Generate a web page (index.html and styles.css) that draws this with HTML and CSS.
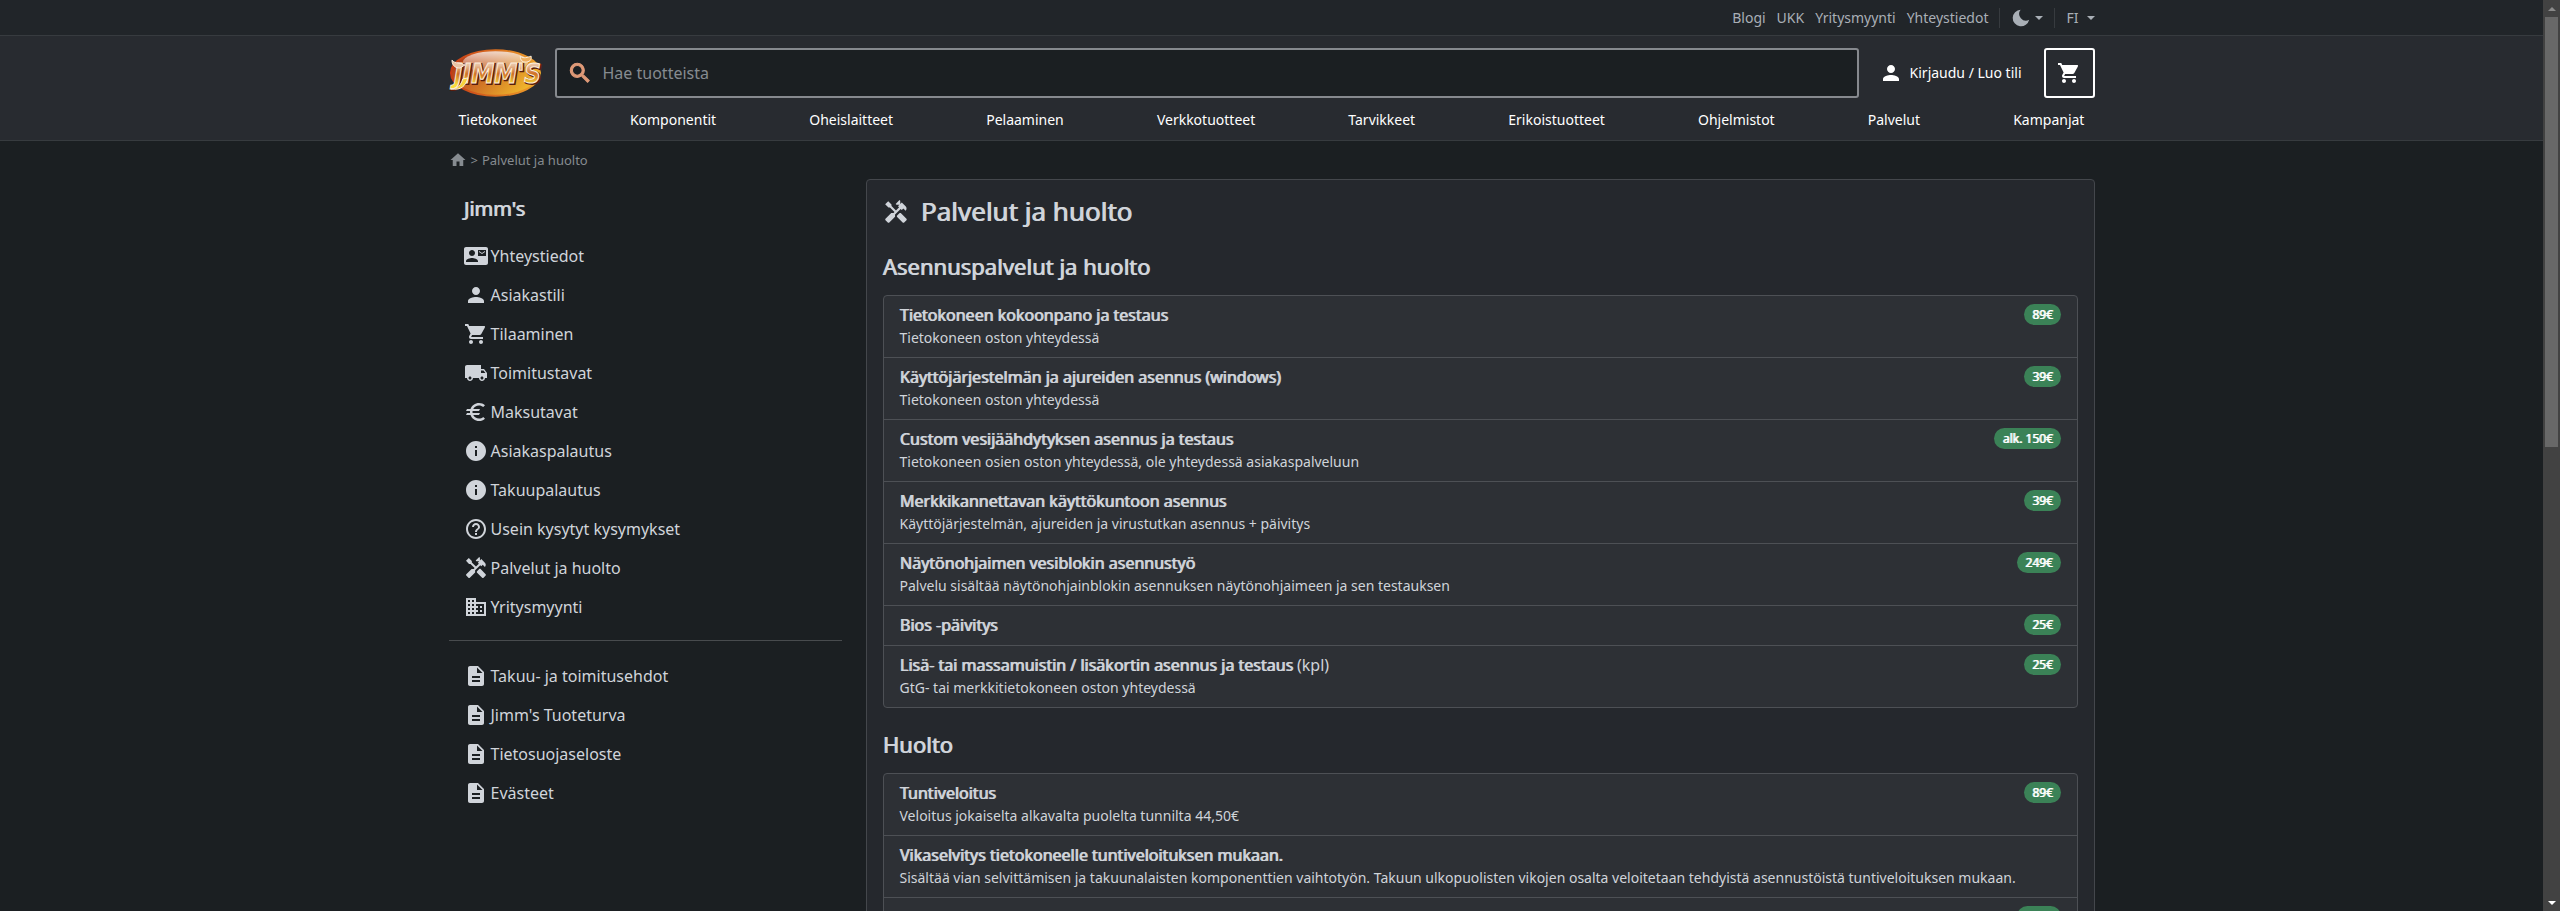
FILE: index.html
```html
<!DOCTYPE html>
<html lang="fi">
<head>
<meta charset="utf-8">
<title>Palvelut ja huolto</title>
<link rel="stylesheet" href="styles.css">
</head>
<body>
<svg class="defs" aria-hidden="true">
  <symbol id="person" viewBox="0 0 24 24"><path d="M12 12c2.21 0 4-1.79 4-4s-1.79-4-4-4-4 1.790-4 4 1.790 4 4 4zm0 2c-2.670 0-8 1.340-8 4v2h16v-2c0-2.660-5.330-4-8-4z"/></symbol>
  <symbol id="cart" viewBox="0 0 24 24"><path d="M7 18c-1.100 0-1.990.9-1.990 2S5.900 22 7 22s2-.9 2-2-.9-2-2-2zM1 2v2h2l3.600 7.590-1.350 2.450c-.16.280-.25.610-.25.960 0 1.100.9 2 2 2h12v-2H7.420c-.14 0-.25-.11-.25-.25l.03-.12.900-1.630h7.450c.75 0 1.410-.41 1.750-1.030l3.580-6.490A1 1 0 0 0 20 4H5.210l-.94-2H1zm16 16c-1.100 0-1.990.9-1.990 2s.89 2 1.990 2 2-.9 2-2-.9-2-2-2z"/></symbol>
  <symbol id="tools" viewBox="0 0 24 24"><path d="M21.670 18.170l-5.300-5.300h-.99l-2.540 2.540v.99l5.300 5.300c.39.390 1.020.390 1.410 0l2.120-2.120c.39-.38.390-1.020 0-1.410z"/><path d="M17.340 10.190l1.410-1.410 2.120 2.120c1.170-1.170 1.170-3.070 0-4.240l-3.540-3.540-1.410 1.410V1.710L15.220 1l-3.540 3.540.71.710h2.830l-1.410 1.410 1.060 1.060-2.890 2.890-4.130-4.130V5.060L4.830 2.040 2 4.870 5.030 7.900h1.410l4.130 4.130-.85.850H7.600l-5.300 5.300c-.39.390-.39 1.020 0 1.410l2.120 2.120c.39.390 1.020.390 1.410 0l5.300-5.300v-2.120l5.150-5.150 1.060 1.050z"/></symbol>
  <symbol id="info" viewBox="0 0 24 24"><path d="M12 2C6.480 2 2 6.480 2 12s4.480 10 10 10 10-4.480 10-10S17.520 2 12 2zm1 15h-2v-6h2v6zm0-8h-2V7h2v2z"/></symbol>
  <symbol id="doc" viewBox="0 0 24 24"><path d="M14 2H6c-1.100 0-1.990.9-1.990 2L4 20c0 1.100.89 2 1.990 2H18c1.100 0 2-.9 2-2V8l-6-6zm2 16H8v-2h8v2zm0-4H8v-2h8v2zm-3-5V3.500L18.500 9H13z"/></symbol>
  <symbol id="card" viewBox="0 0 24 24"><path d="M21 8V7l-3 2-3-2v1l3 2 3-2zm1-5H2C.9 3 0 3.900 0 5v14c0 1.100.9 2 2 2h20c1.100 0 1.990-.9 1.990-2L24 5c0-1.100-.9-2-2-2zM8 6c1.660 0 3 1.340 3 3s-1.340 3-3 3-3-1.340-3-3 1.340-3 3-3zm6 12H2v-1c0-2 4-3.100 6-3.100s6 1.100 6 3.100v1zm8-6h-8V6h8v6z"/></symbol>
  <symbol id="truck" viewBox="0 0 24 24"><path d="M20 8h-3V4H3c-1.100 0-2 .9-2 2v11h2c0 1.660 1.340 3 3 3s3-1.340 3-3h6c0 1.660 1.340 3 3 3s3-1.340 3-3h2v-5l-3-4zM6 18.500c-.83 0-1.500-.67-1.500-1.500s.67-1.500 1.500-1.500 1.500.67 1.500 1.500-.67 1.500-1.500 1.500zm13.500-9l1.960 2.500H17V9.500h2.500zm-1.500 9c-.83 0-1.500-.67-1.500-1.500s.67-1.500 1.500-1.500 1.500.67 1.500 1.500-.67 1.500-1.500 1.500z"/></symbol>
  <symbol id="euro" viewBox="0 0 24 24"><path d="M15 18.500c-2.510 0-4.680-1.420-5.760-3.500H15l1-2H8.580c-.05-.33-.08-.66-.08-1s.03-.67.080-1H15l1-2H9.240C10.320 6.920 12.500 5.500 15 5.500c1.610 0 3.090.590 4.230 1.570L21 5.300C19.410 3.870 17.300 3 15 3c-3.920 0-7.240 2.510-8.480 6H3l-1 2h4.060a8.300 8.300 0 0 0 0 2H3l-1 2h4.520c1.240 3.490 4.560 6 8.480 6 2.310 0 4.410-.87 6-2.300l-1.780-1.770c-1.130.980-2.600 1.570-4.220 1.570z"/></symbol>
  <symbol id="help" viewBox="0 0 24 24"><path d="M11 18h2v-2h-2v2zm1-16C6.480 2 2 6.480 2 12s4.480 10 10 10 10-4.480 10-10S17.520 2 12 2zm0 18c-4.410 0-8-3.590-8-8s3.590-8 8-8 8 3.590 8 8-3.590 8-8 8zm0-14c-2.210 0-4 1.790-4 4h2c0-1.100.9-2 2-2s2 .9 2 2c0 2-3 1.750-3 5h2c0-2.250 3-2.500 3-5 0-2.210-1.790-4-4-4z"/></symbol>
  <symbol id="company" viewBox="0 0 24 24"><path d="M12 7V3H2v18h20V7H12zM6 19H4v-2h2v2zm0-4H4v-2h2v2zm0-4H4V9h2v2zm0-4H4V5h2v2zm4 12H8v-2h2v2zm0-4H8v-2h2v2zm0-4H8V9h2v2zm0-4H8V5h2v2zm10 12h-8v-2h2v-2h-2v-2h2v-2h-2V9h8v10zm-2-8h-2v2h2v-2zm0 4h-2v2h2v-2z"/></symbol>
  <symbol id="home" viewBox="0 0 24 24"><path d="M10 20v-6h4v6h5v-8h3L12 3 2 12h3v8z"/></symbol>
  <symbol id="search" viewBox="0 0 24 24"><path d="M15.500 14h-.79l-.28-.27A6.470 6.470 0 0 0 16 9.500 6.500 6.500 0 1 0 9.500 16c1.610 0 3.090-.59 4.230-1.570l.27.280v.79l5 4.990L20.490 19l-4.990-5zm-6 0C7.010 14 5 11.990 5 9.500S7.010 5 9.500 5 14 7.010 14 9.500 11.990 14 9.500 14z"/></symbol>
  <symbol id="moon" viewBox="0 0 24 24"><path d="M11.500 2a10 10 0 1 0 10.300 12.200A8.200 8.200 0 0 1 11.500 2z"/></symbol>
</svg>
<div class="viewport">
  <div class="page">
    <div class="topbar">
      <div class="container topbar-inner">
        <nav class="toplinks" aria-label="Yritys">
          <a href="#">Blogi</a><a href="#">UKK</a><a href="#">Yritysmyynti</a><a href="#">Yhteystiedot</a>
        </nav>
        <button class="drop theme" type="button" aria-label="Teema"><svg class="moon"><use href="#moon"/></svg><span class="caret"></span></button>
        <button class="drop lang" type="button">FI<span class="caret"></span></button>
      </div>
    </div>
    <header class="header">
      <div class="container">
        <div class="header-row">
          <a class="logo" href="#" aria-label="Jimm's">
            <svg viewBox="0 0 94 50">
              <defs>
                <linearGradient id="oval" x1="0" y1="0" x2="1" y2="0.500"><stop offset="0" stop-color="#a82a12"/><stop offset=".5" stop-color="#cc6a24"/><stop offset="1" stop-color="#efb42c"/></linearGradient>
                <linearGradient id="rim" x1="0" y1="0" x2="1" y2="0"><stop offset="0" stop-color="#c63a14"/><stop offset="1" stop-color="#f0a52c"/></linearGradient>
                <linearGradient id="shine" x1="0" y1="0" x2="0" y2="1"><stop offset="0" stop-color="#fff" stop-opacity=".75"/><stop offset="1" stop-color="#fff" stop-opacity=".05"/></linearGradient>
                <linearGradient id="letters" x1="0" y1="0" x2="0" y2="1"><stop offset="0.200" stop-color="#e9c3a4"/><stop offset=".5" stop-color="#cf6f26"/><stop offset=".85" stop-color="#f8dc3c"/></linearGradient>
              </defs>
              <ellipse cx="47" cy="25" rx="45" ry="23" fill="url(#oval)" stroke="url(#rim)" stroke-width="2"/>
              <ellipse cx="47" cy="14" rx="33" ry="11" fill="url(#shine)"/>
              <text class="logo-shadow" x="6" y="36">JIMM'S</text>
              <text class="logo-text" x="5" y="35">JIMM'S</text>
              <path d="M2 41c7 0 10-4 12-10l5-1c-2 8-7 13-17 11z" fill="#f6d23a" stroke="#fbeedd"/>
              <path d="M3 12c3 4 9 2 13 5l-5 3c-4 0-8-2-8-8z" fill="#e9c3a4" stroke="#fbeedd"/>
              <path d="M72 8c4 3 7 1 11 0 1 4-2 6-6 6-3 0-5-2-5-6z" fill="#efb060" stroke="#fbeedd"/>
            </svg>
          </a>
          <form class="search" role="search">
            <svg><use href="#search"/></svg>
            <input type="text" aria-label="Hae tuotteista" placeholder="Hae tuotteista">
          </form>
          <a class="login" href="#"><svg><use href="#person"/></svg>Kirjaudu / Luo tili</a>
          <button class="cart" type="button" aria-label="Ostoskori"><svg><use href="#cart"/></svg></button>
        </div>
        <nav class="mainnav" aria-label="Tuotealueet">
          <a href="#">Tietokoneet</a><a href="#">Komponentit</a><a href="#">Oheislaitteet</a><a href="#">Pelaaminen</a><a href="#">Verkkotuotteet</a><a href="#">Tarvikkeet</a><a href="#">Erikoistuotteet</a><a href="#">Ohjelmistot</a><a href="#">Palvelut</a><a href="#">Kampanjat</a>
        </nav>
      </div>
    </header>
    <div class="container">
      <nav class="crumbs" aria-label="Murupolku"><a href="#" aria-label="Etusivu"><svg><use href="#home"/></svg></a><span>&gt;</span><a href="#">Palvelut ja huolto</a></nav>
      <div class="columns">
        <aside class="side">
          <h2>Jimm's</h2>
          <ul>
            <li><a href="#"><svg><use href="#card"/></svg>Yhteystiedot</a></li>
            <li><a href="#"><svg><use href="#person"/></svg>Asiakastili</a></li>
            <li><a href="#"><svg><use href="#cart"/></svg>Tilaaminen</a></li>
            <li><a href="#"><svg><use href="#truck"/></svg>Toimitustavat</a></li>
            <li><a href="#"><svg><use href="#euro"/></svg>Maksutavat</a></li>
            <li><a href="#"><svg><use href="#info"/></svg>Asiakaspalautus</a></li>
            <li><a href="#"><svg><use href="#info"/></svg>Takuupalautus</a></li>
            <li><a href="#"><svg><use href="#help"/></svg>Usein kysytyt kysymykset</a></li>
            <li><a href="#"><svg><use href="#tools"/></svg>Palvelut ja huolto</a></li>
            <li><a href="#"><svg><use href="#company"/></svg>Yritysmyynti</a></li>
          </ul>
          <hr>
          <ul>
            <li><a href="#"><svg><use href="#doc"/></svg>Takuu- ja toimitusehdot</a></li>
            <li><a href="#"><svg><use href="#doc"/></svg>Jimm's Tuoteturva</a></li>
            <li><a href="#"><svg><use href="#doc"/></svg>Tietosuojaseloste</a></li>
            <li><a href="#"><svg><use href="#doc"/></svg>Evästeet</a></li>
          </ul>
        </aside>
        <main class="panel">
          <h1><svg><use href="#tools"/></svg>Palvelut ja huolto</h1>
          <h2>Asennuspalvelut ja huolto</h2>
          <ul class="services">
            <li><div><p class="name"><b>Tietokoneen kokoonpano ja testaus</b></p><p class="note">Tietokoneen oston yhteydessä</p></div><span class="price">89€</span></li>
            <li><div><p class="name"><b>Käyttöjärjestelmän ja ajureiden asennus (windows)</b></p><p class="note">Tietokoneen oston yhteydessä</p></div><span class="price">39€</span></li>
            <li><div><p class="name"><b>Custom vesijäähdytyksen asennus ja testaus</b></p><p class="note">Tietokoneen osien oston yhteydessä, ole yhteydessä asiakaspalveluun</p></div><span class="price">alk. 150€</span></li>
            <li><div><p class="name"><b>Merkkikannettavan käyttökuntoon asennus</b></p><p class="note">Käyttöjärjestelmän, ajureiden ja virustutkan asennus + päivitys</p></div><span class="price">39€</span></li>
            <li><div><p class="name"><b>Näytönohjaimen vesiblokin asennustyö</b></p><p class="note">Palvelu sisältää näytönohjainblokin asennuksen näytönohjaimeen ja sen testauksen</p></div><span class="price">249€</span></li>
            <li><div><p class="name"><b>Bios -päivitys</b></p></div><span class="price">25€</span></li>
            <li><div><p class="name"><b>Lisä- tai massamuistin / lisäkortin asennus ja testaus</b> (kpl)</p><p class="note">GtG- tai merkkitietokoneen oston yhteydessä</p></div><span class="price">25€</span></li>
          </ul>
          <h2>Huolto</h2>
          <ul class="services">
            <li><div><p class="name"><b>Tuntiveloitus</b></p><p class="note">Veloitus jokaiselta alkavalta puolelta tunnilta 44,50€</p></div><span class="price">89€</span></li>
            <li><div><p class="name"><b>Vikaselvitys tietokoneelle tuntiveloituksen mukaan.</b></p><p class="note">Sisältää vian selvittämisen ja takuunalaisten komponenttien vaihtotyön. Takuun ulkopuolisten vikojen osalta veloitetaan tehdyistä asennustöistä tuntiveloituksen mukaan.</p></div></li>
            <li><div><p class="name"><b>Laajennus paikan päällä</b></p></div><span class="price">149€</span></li>
          </ul>
        </main>
      </div>
    </div>
  </div>
  <div class="scrollbar" aria-hidden="true"><span class="arrow up"></span><span class="track"><span class="thumb"></span></span><span class="arrow down"></span></div>
</div>
</body>
</html>
```
FILE: styles.css
```css
* { box-sizing: border-box; }
body {
  margin: 0;
  background: #1b1f22;
  color: #d0d4da;
  font: 16px/24px "Noto Sans", "Open Sans", sans-serif;
}
a { color: inherit; text-decoration: none; }
button { font: inherit; color: inherit; background: none; border: 0; padding: 0; }
h1, h2, p, ul { margin: 0; padding: 0; font-weight: 400; }
ul { list-style: none; }
svg { fill: currentColor; flex: none; }
.defs { display: none; }

.viewport { display: flex; height: 100vh; overflow: hidden; }
.page { flex: 1; min-width: 0; }
.container { max-width: 1646px; margin: 0 auto; }

.topbar { background: #212529; border-bottom: 1px solid #373b3f; font-size: 14px; line-height: 21px; color: #a9afb6; }
.topbar-inner { display: flex; justify-content: flex-end; align-items: center; height: 35px; }
.toplinks { display: flex; gap: 11px; padding-right: 11px; }
.drop { display: flex; align-items: center; height: 20px; border-left: 1px solid #373b3f; }
.theme { gap: 4px; padding: 0 11px; }
.lang { gap: 8px; padding-left: 11px; }
.moon { width: 20px; height: 20px; }
.caret { border: 4px solid transparent; border-top-color: currentColor; border-bottom: 0; }

.header { background: #282b30; border-bottom: 1px solid #373b3f; color: #fff; }
.header-row { display: flex; align-items: center; padding-top: 12px; }
.logo { display: flex; margin-right: 13px; }
.logo svg { width: 93px; height: 50px; overflow: visible; }
.logo text { font: italic bold 26px "DejaVu Sans Condensed", "DejaVu Sans", sans-serif; }
.logo-shadow { fill: #5a1c0c; stroke: #5a1c0c; stroke-width: 2px; }
.logo-text { fill: url(#letters); stroke: #fbeedd; stroke-width: 1px; }
.search {
  flex: 1; display: flex; align-items: center; gap: 10px; height: 50px; padding-left: 10px;
  background: #1b1f22; border: 2px solid #86898e; border-radius: 3px;
}
.search svg { width: 26px; height: 26px; color: #e09a78; stroke: currentColor; }
.search input { flex: 1; border: 0; padding: 0; background: none; color: #fff; font: inherit; outline: 0; }
.search input::placeholder { color: #868b90; opacity: 1; }
.login { display: flex; align-items: center; gap: 7px; margin: 0 22px 0 20px; font-size: 14px; }
.login svg { width: 24px; height: 24px; }
.cart { display: flex; align-items: center; justify-content: center; width: 51px; height: 50px; border: 2px solid #fff; border-radius: 3px; }
.cart svg { width: 24px; height: 24px; }
.mainnav { display: flex; justify-content: space-between; padding: 11px 10px 10px; font-size: 14px; line-height: 21px; }

.crumbs { display: flex; align-items: center; gap: 4px; height: 38px; font-size: 13px; color: #868b90; }
.crumbs a { display: flex; }
.crumbs svg { width: 18px; height: 18px; }

.columns { display: grid; grid-template-columns: 393px 1fr; gap: 24px; align-items: start; }
.side h2 { padding: 15px 15px 13px; font-size: 20px; line-height: 29px; text-shadow: 1px 0 currentColor; }
.side a { display: flex; align-items: center; gap: 3px; height: 39px; padding-left: 15px; }
.side svg { width: 24px; height: 24px; }
.side hr { margin: 14px 0 15px; border: 0; border-top: 1px solid #484b4e; }

.panel { background: #25282d; border: 1px solid #44474c; border-radius: 4px; padding: 13px 16px; }
.panel h1 { display: flex; align-items: center; gap: 12px; font-size: 26px; line-height: 37px; text-shadow: 1px 0 currentColor; }
.panel h1 svg { width: 26px; height: 26px; }
.panel h2 { margin: 22px 0 14px; font-size: 22px; line-height: 29px; text-shadow: 1px 0 currentColor; }
.services { border: 1px solid #4d5055; border-radius: 4px; background: #2d3035; }
.services li { display: flex; justify-content: space-between; align-items: flex-start; padding: 8px 16px; }
.services li + li { border-top: 1px solid #4d5055; }
.name { line-height: 23px; }
.name b { font-weight: 400; text-shadow: 1px 0 currentColor; }
.note { font-size: 14px; line-height: 22px; }
.price { padding: 4px 8px; border-radius: 11px; background: #3b8257; color: #fff; font-size: 12px; line-height: 13px; text-shadow: 1px 0 currentColor; }

.scrollbar { display: flex; flex-direction: column; align-items: center; width: 17px; background: #424242; }
.arrow { width: 17px; height: 17px; display: flex; align-items: center; justify-content: center; }
.arrow::before { content: ""; border: 4px solid transparent; }
.up::before { border-bottom-color: #8a8a8a; border-top: 0; }
.down::before { border-top-color: #fff; border-bottom: 0; }
.track { flex: 1; }
.thumb { display: block; width: 13px; height: 49%; background: #686868; }
```
